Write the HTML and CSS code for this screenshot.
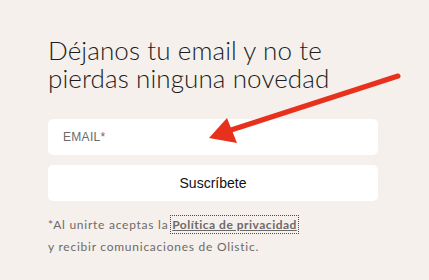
FILE: index.html
```html
<!DOCTYPE html>
<html>
	<head>
		<meta charset="UTF-8">
		<title>Newsletter</title>
		<link rel="stylesheet" href="styles.css">
	</head>
	<body>
		<div class="page">
			<div class="form">
				<h2 class="title">Déjanos tu email y no te pierdas ninguna novedad</h2>
				<input class="field" type="email" placeholder="EMAIL*">
				<button class="btn">Suscríbete</button>
				<p class="legal">*Al unirte aceptas la <a class="link" href="#">Política de privacidad</a><br>y recibir comunicaciones de Olistic.</p>
			</div>
			<svg class="arrow" width="429" height="280" viewBox="0 0 429 280">
				<line x1="398" y1="76" x2="228" y2="131" stroke="#e8311c" stroke-width="5" stroke-linecap="round"/>
				<polygon points="209,138 227,118 237,143" fill="#e8311c"/>
			</svg>
		</div>
	</body>
</html>
```

FILE: styles.css
```css
*{
	padding:0;
	margin:0;
	box-sizing: border-box;
}
html,body{
	background: #f5f0ec;
}
.page{
	width:429px;
	height:280px;
	position: relative;
	overflow: hidden;
}
.form{
	padding:36px 51px 0 48px;
	display: flex;
	flex-direction: column;
}
.title{
	font-family: Lato, "Liberation Sans", sans-serif;
	font-weight: 300;
	font-size: 26px;
	line-height: 28px;
	letter-spacing: 0.1px;
	color: #1c1c1c;
	margin-bottom: 27px;
}
.field{
	height:36px;
	border: none;
	border-radius: 5px;
	background: #fff;
	padding: 0 15px;
	font-family: "Liberation Sans", Arial, sans-serif;
	font-size: 12px;
	outline: none;
}
.field::placeholder{
	color: #6b6b6b;
	letter-spacing: 0.3px;
}
.btn{
	margin-top: 10px;
	height:36px;
	border: none;
	border-radius: 5px;
	background: #fff;
	font-family: "Liberation Sans", Arial, sans-serif;
	font-size: 14px;
	color: #111;
}
.legal{
	margin-top: 13px;
	font-family: Lato, "Liberation Sans", sans-serif;
	font-size: 12px;
	line-height: 22px;
	letter-spacing: 0.75px;
	color: #6e6a68;
}
.link{
	color: #6e6a68;
	font-weight: 700;
	letter-spacing: 0.5px;
	text-decoration: underline;
	outline: 1px dotted #b0202a;
	outline-offset: 1px;
}
.arrow{
	position: absolute;
	left:0;
	top:0;
	pointer-events: none;
}
```
